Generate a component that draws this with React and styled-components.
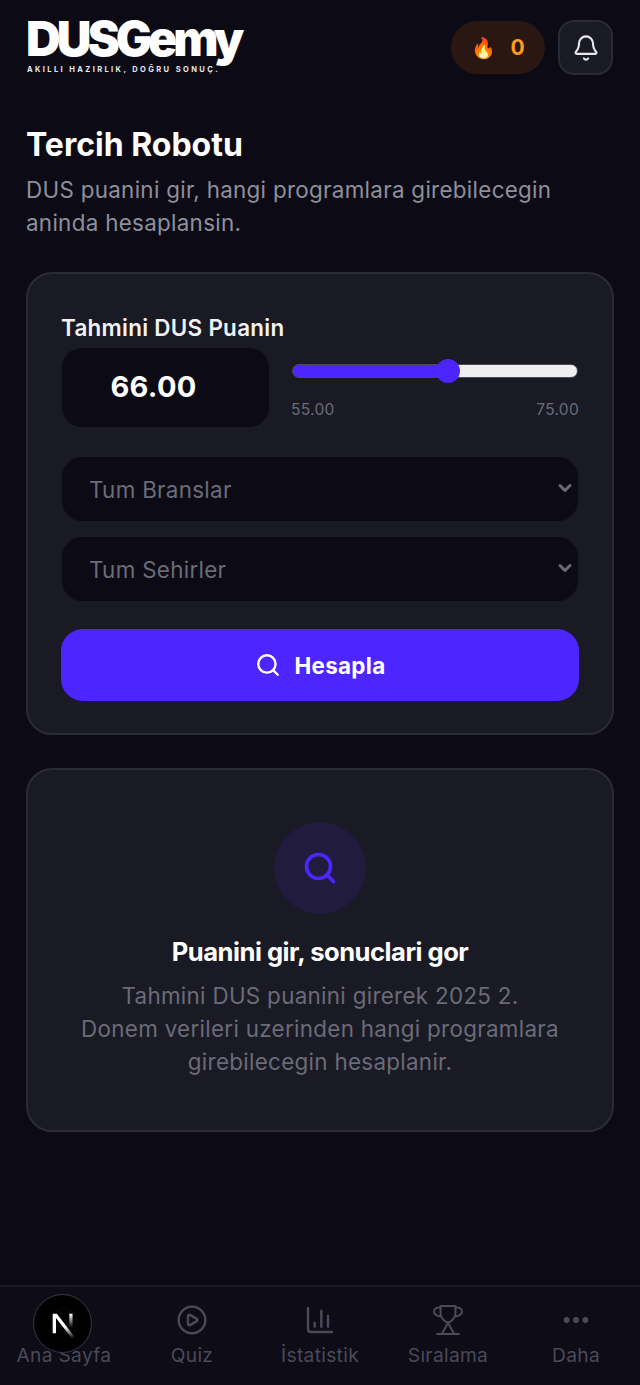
import React from 'react';
import styled, { createGlobalStyle } from 'styled-components';
import { Bell, Search, CirclePlay, ChartColumn, Ellipsis, House, ChevronDown } from 'lucide-react';

const GlobalStyle = createGlobalStyle`
  html, body {
    margin: 0;
    padding: 0;
    background: #0c0b15;
  }
  * {
    box-sizing: border-box;
  }
  body {
    font-family: 'Inter', 'Liberation Sans', sans-serif;
    letter-spacing: 0.3px;
  }
`;

const TrophyIcon = () => (
  <svg width="32" height="32" viewBox="0 0 32 32" fill="none" stroke="currentColor" strokeWidth="2" strokeLinecap="round" strokeLinejoin="round">
    <path d="M8.5 2h15v7c0 4.5-3.5 8-7.5 10-4-2-7.5-5.500-7.500-10z" />
    <path d="M8.5 3.500C5 3 2 4.500 2 7.500s3 4.500 7 5" />
    <path d="M23.500 3.500c3.500-.5 6.500 1 6.500 4s-3 4.500-7 5" />
    <path d="M16 19l-6 10.500M16 19l6 10.500" />
    <path d="M5 30h22" />
  </svg>
);

const navItems = [
  { label: 'Ana Sayfa', icon: <House size={32} strokeWidth={1.8} /> },
  { label: 'Quiz', icon: <CirclePlay size={32} strokeWidth={1.8} /> },
  { label: 'İstatistik', icon: <ChartColumn size={32} strokeWidth={1.8} /> },
  { label: 'Sıralama', icon: <TrophyIcon /> },
  { label: 'Daha', icon: <Ellipsis size={32} strokeWidth={2.4} /> },
];

const App = () => {
  return (
    <Page>
      <GlobalStyle />
      <Header>
        <Logo>
          <LogoName>DUSGemy</LogoName>
          <LogoTag>AKILLI HAZIRLIK, DOĞRU SONUÇ.</LogoTag>
        </Logo>
        <HeaderActions>
          <Streak>
            <span>🔥</span>
            <StreakCount>0</StreakCount>
          </Streak>
          <BellButton>
            <Bell size={28} strokeWidth={1.8} />
          </BellButton>
        </HeaderActions>
      </Header>

      <Main>
        <Title>Tercih Robotu</Title>
        <Subtitle>DUS puanini gir, hangi programlara girebilecegin aninda hesaplansin.</Subtitle>

        <FormCard>
          <Label>Tahmini DUS Puanin</Label>
          <ScoreRow>
            <ScoreBox>66.00</ScoreBox>
            <SliderWrap>
              <Slider type="range" min="55" max="75" step="0.01" defaultValue="66" />
              <SliderLabels>
                <span>55.00</span>
                <span>75.00</span>
              </SliderLabels>
            </SliderWrap>
          </ScoreRow>
          <SelectWrap>
            <Select defaultValue="">
              <option value="">Tum Branslar</option>
            </Select>
            <SelectArrow size={20} strokeWidth={3.6} />
          </SelectWrap>
          <SelectWrap>
            <Select defaultValue="">
              <option value="">Tum Sehirler</option>
            </Select>
            <SelectArrow size={20} strokeWidth={3.6} />
          </SelectWrap>
          <SubmitButton type="button">
            <Search size={26} strokeWidth={2.2} />
            Hesapla
          </SubmitButton>
        </FormCard>

        <EmptyCard>
          <EmptyIcon>
            <Search size={36} strokeWidth={2.4} />
          </EmptyIcon>
          <EmptyTitle>Puanini gir, sonuclari gor</EmptyTitle>
          <EmptyText>
            Tahmini DUS puanini girerek 2025 2.
            <br />
            Donem verileri uzerinden hangi programlara
            <br />
            girebilecegin hesaplanir.
          </EmptyText>
        </EmptyCard>
      </Main>

      <BottomNav>
        {navItems.map(({ label, icon }) => (
          <NavItem key={label}>
            {icon}
            <span>{label}</span>
          </NavItem>
        ))}
      </BottomNav>

      <DevBadge>
        <svg width="49" height="49" viewBox="0 0 180 180" fill="none">
          <defs>
            <linearGradient id="nextA" x1="100" y1="100" x2="134" y2="142" gradientUnits="userSpaceOnUse">
              <stop stopColor="#fff" />
              <stop offset="1" stopColor="#fff" stopOpacity="0" />
            </linearGradient>
            <linearGradient id="nextB" x1="121" y1="54" x2="120" y2="106" gradientUnits="userSpaceOnUse">
              <stop stopColor="#fff" />
              <stop offset="1" stopColor="#fff" stopOpacity="0" />
            </linearGradient>
          </defs>
          <path d="M149.5 157.5L69.1 54H54v72h12.1V69.4l73.8 95.3c3.4-2.2 6.6-4.7 9.6-7.2z" fill="url(#nextA)" />
          <rect x="115" y="54" width="12" height="72" fill="url(#nextB)" />
        </svg>
      </DevBadge>
    </Page>
  );
};

const Page = styled.div`
  position: relative;
  width: 640px;
  height: 1385px;
  overflow: hidden;
  background: #0c0b15;
  color: #fff;
`;

const Header = styled.header`
  display: flex;
  align-items: flex-start;
  justify-content: space-between;
  padding: 20px 27px 0 26px;
  height: 75px;
`;

const Logo = styled.div`
  display: flex;
  flex-direction: column;
  width: 218px;
  margin-top: 1px;
`;

const LogoName = styled.div`
  font-size: 48px;
  line-height: 36px;
  font-weight: 900;
  letter-spacing: -3.85px;
  color: #fff;
`;

const LogoTag = styled.div`
  margin: 8px 0 0 1px;
  font-size: 7.5px;
  line-height: 9px;
  font-weight: 700;
  letter-spacing: 2.4px;
  color: #e8e8ec;
  white-space: nowrap;
`;

const HeaderActions = styled.div`
  display: flex;
  align-items: center;
  gap: 13px;
`;

const Streak = styled.div`
  display: flex;
  align-items: center;
  justify-content: center;
  gap: 14px;
  width: 94px;
  height: 53px;
  border-radius: 27px;
  background: #2a1712;
  font-size: 20px;
`;

const StreakCount = styled.span`
  color: #ff9a1f;
  font-weight: 700;
  font-size: 21px;
`;

const BellButton = styled.div`
  display: flex;
  align-items: center;
  justify-content: center;
  width: 55px;
  height: 55px;
  border-radius: 16px;
  background: #1a1a25;
  border: 2px solid #2a2a38;
  color: #e8e8ec;
`;

const Main = styled.main`
  padding: 0 26px;
`;

const Title = styled.h1`
  margin: 50px 0 0;
  font-size: 32px;
  line-height: 40px;
  font-weight: 700;
  letter-spacing: 0;
  color: #fff;
`;

const Subtitle = styled.p`
  margin: 8px 0 0;
  font-size: 22.4px;
  line-height: 33px;
  color: #8f8f9b;
`;

const FormCard = styled.section`
  display: flex;
  flex-direction: column;
  margin-top: 33px;
  height: 463px;
  padding: 40px 34px 0;
  border-radius: 26px;
  background: #1a1a25;
  border: 2px solid #2a2a38;
`;

const Label = styled.label`
  margin: 0 0 7px -1px;
  font-size: 22.4px;
  line-height: 27px;
  font-weight: 600;
  color: #f2f2f5;
`;

const ScoreRow = styled.div`
  display: flex;
  gap: 22px;
  height: 79px;
  margin-bottom: 30px;
`;

const ScoreBox = styled.div`
  display: flex;
  align-items: center;
  justify-content: center;
  width: 207px;
  height: 79px;
  padding: 0 24px 3px 0;
  border-radius: 20px;
  background: #0c0b15;
  font-size: 29px;
  font-weight: 700;
  color: #fff;
`;

const SliderWrap = styled.div`
  display: flex;
  flex-direction: column;
  flex: 1;
  padding-top: 11px;
  margin-right: -1px;
`;

const Slider = styled.input`
  appearance: none;
  display: block;
  width: 286px;
  height: 24px;
  margin: 0 0 0 1px;
  background: transparent;

  &::-webkit-slider-runnable-track {
    height: 14px;
    border-radius: 7px;
    border: 1px solid #4a4a58;
    background: linear-gradient(to right, #4d26ff 55%, #efefef 55%);
  }

  &::-webkit-slider-thumb {
    appearance: none;
    width: 24px;
    height: 24px;
    margin-top: -6px;
    border-radius: 50%;
    background: #4d26ff;
  }
`;

const SliderLabels = styled.div`
  display: flex;
  justify-content: space-between;
  margin-top: 17px;
  font-size: 15.5px;
  line-height: 20px;
  color: #6b6b78;
`;

const SelectWrap = styled.div`
  position: relative;
  height: 64px;
  margin-bottom: 16px;
`;

const Select = styled.select`
  appearance: none;
  display: block;
  width: 516px;
  height: 64px;
  padding: 0 40px 0 27px;
  border: none;
  outline: none;
  border-radius: 20px;
  background: #0c0b15;
  color: #6b6b78;
  font-family: inherit;
  font-size: 22.4px;
  letter-spacing: inherit;
`;

const SelectArrow = styled(ChevronDown)`
  position: absolute;
  right: 3px;
  top: 21px;
  color: #6b6b78;
  pointer-events: none;
`;

const SubmitButton = styled.button`
  display: flex;
  align-items: center;
  justify-content: center;
  gap: 14px;
  width: 518px;
  height: 72px;
  margin: 12px 0 0 -1px;
  padding-bottom: 1px;
  border: none;
  border-radius: 22px;
  background: #4d26ff;
  color: #fff;
  font-family: inherit;
  font-size: 22.4px;
  font-weight: 700;
  letter-spacing: inherit;
`;

const EmptyCard = styled.section`
  display: flex;
  flex-direction: column;
  align-items: center;
  margin-top: 33px;
  height: 364px;
  padding-top: 52px;
  border-radius: 26px;
  background: #1a1a25;
  border: 2px solid #2a2a38;
`;

const EmptyIcon = styled.div`
  display: flex;
  align-items: center;
  justify-content: center;
  width: 92px;
  height: 92px;
  border-radius: 50%;
  background: #211b3e;
  color: #4d26ff;
`;

const EmptyTitle = styled.h3`
  margin: 22px 0 0;
  font-size: 25.6px;
  line-height: 32px;
  font-weight: 700;
  letter-spacing: -0.5px;
  color: #fff;
`;

const EmptyText = styled.p`
  margin: 11px 0 0;
  font-size: 22.4px;
  line-height: 33px;
  text-align: center;
  color: #6b6b78;
`;

const BottomNav = styled.nav`
  position: absolute;
  left: 0;
  right: 0;
  bottom: 0;
  display: grid;
  grid-template-columns: repeat(5, 1fr);
  height: 100px;
  padding-top: 17px;
  background: #0d0c17;
  border-top: 2px solid #1a1a26;
`;

const NavItem = styled.div`
  display: flex;
  flex-direction: column;
  align-items: center;
  gap: 7px;
  color: #4a4a58;
  font-size: 19.2px;
  line-height: 24px;
`;

const DevBadge = styled.div`
  position: absolute;
  left: 33px;
  top: 1294px;
  display: flex;
  align-items: center;
  justify-content: center;
  width: 59px;
  height: 59px;
  border-radius: 50%;
  background: rgba(0, 0, 0, 0.94);
  border: 1px solid #3a3a44;
`;

export default App;
